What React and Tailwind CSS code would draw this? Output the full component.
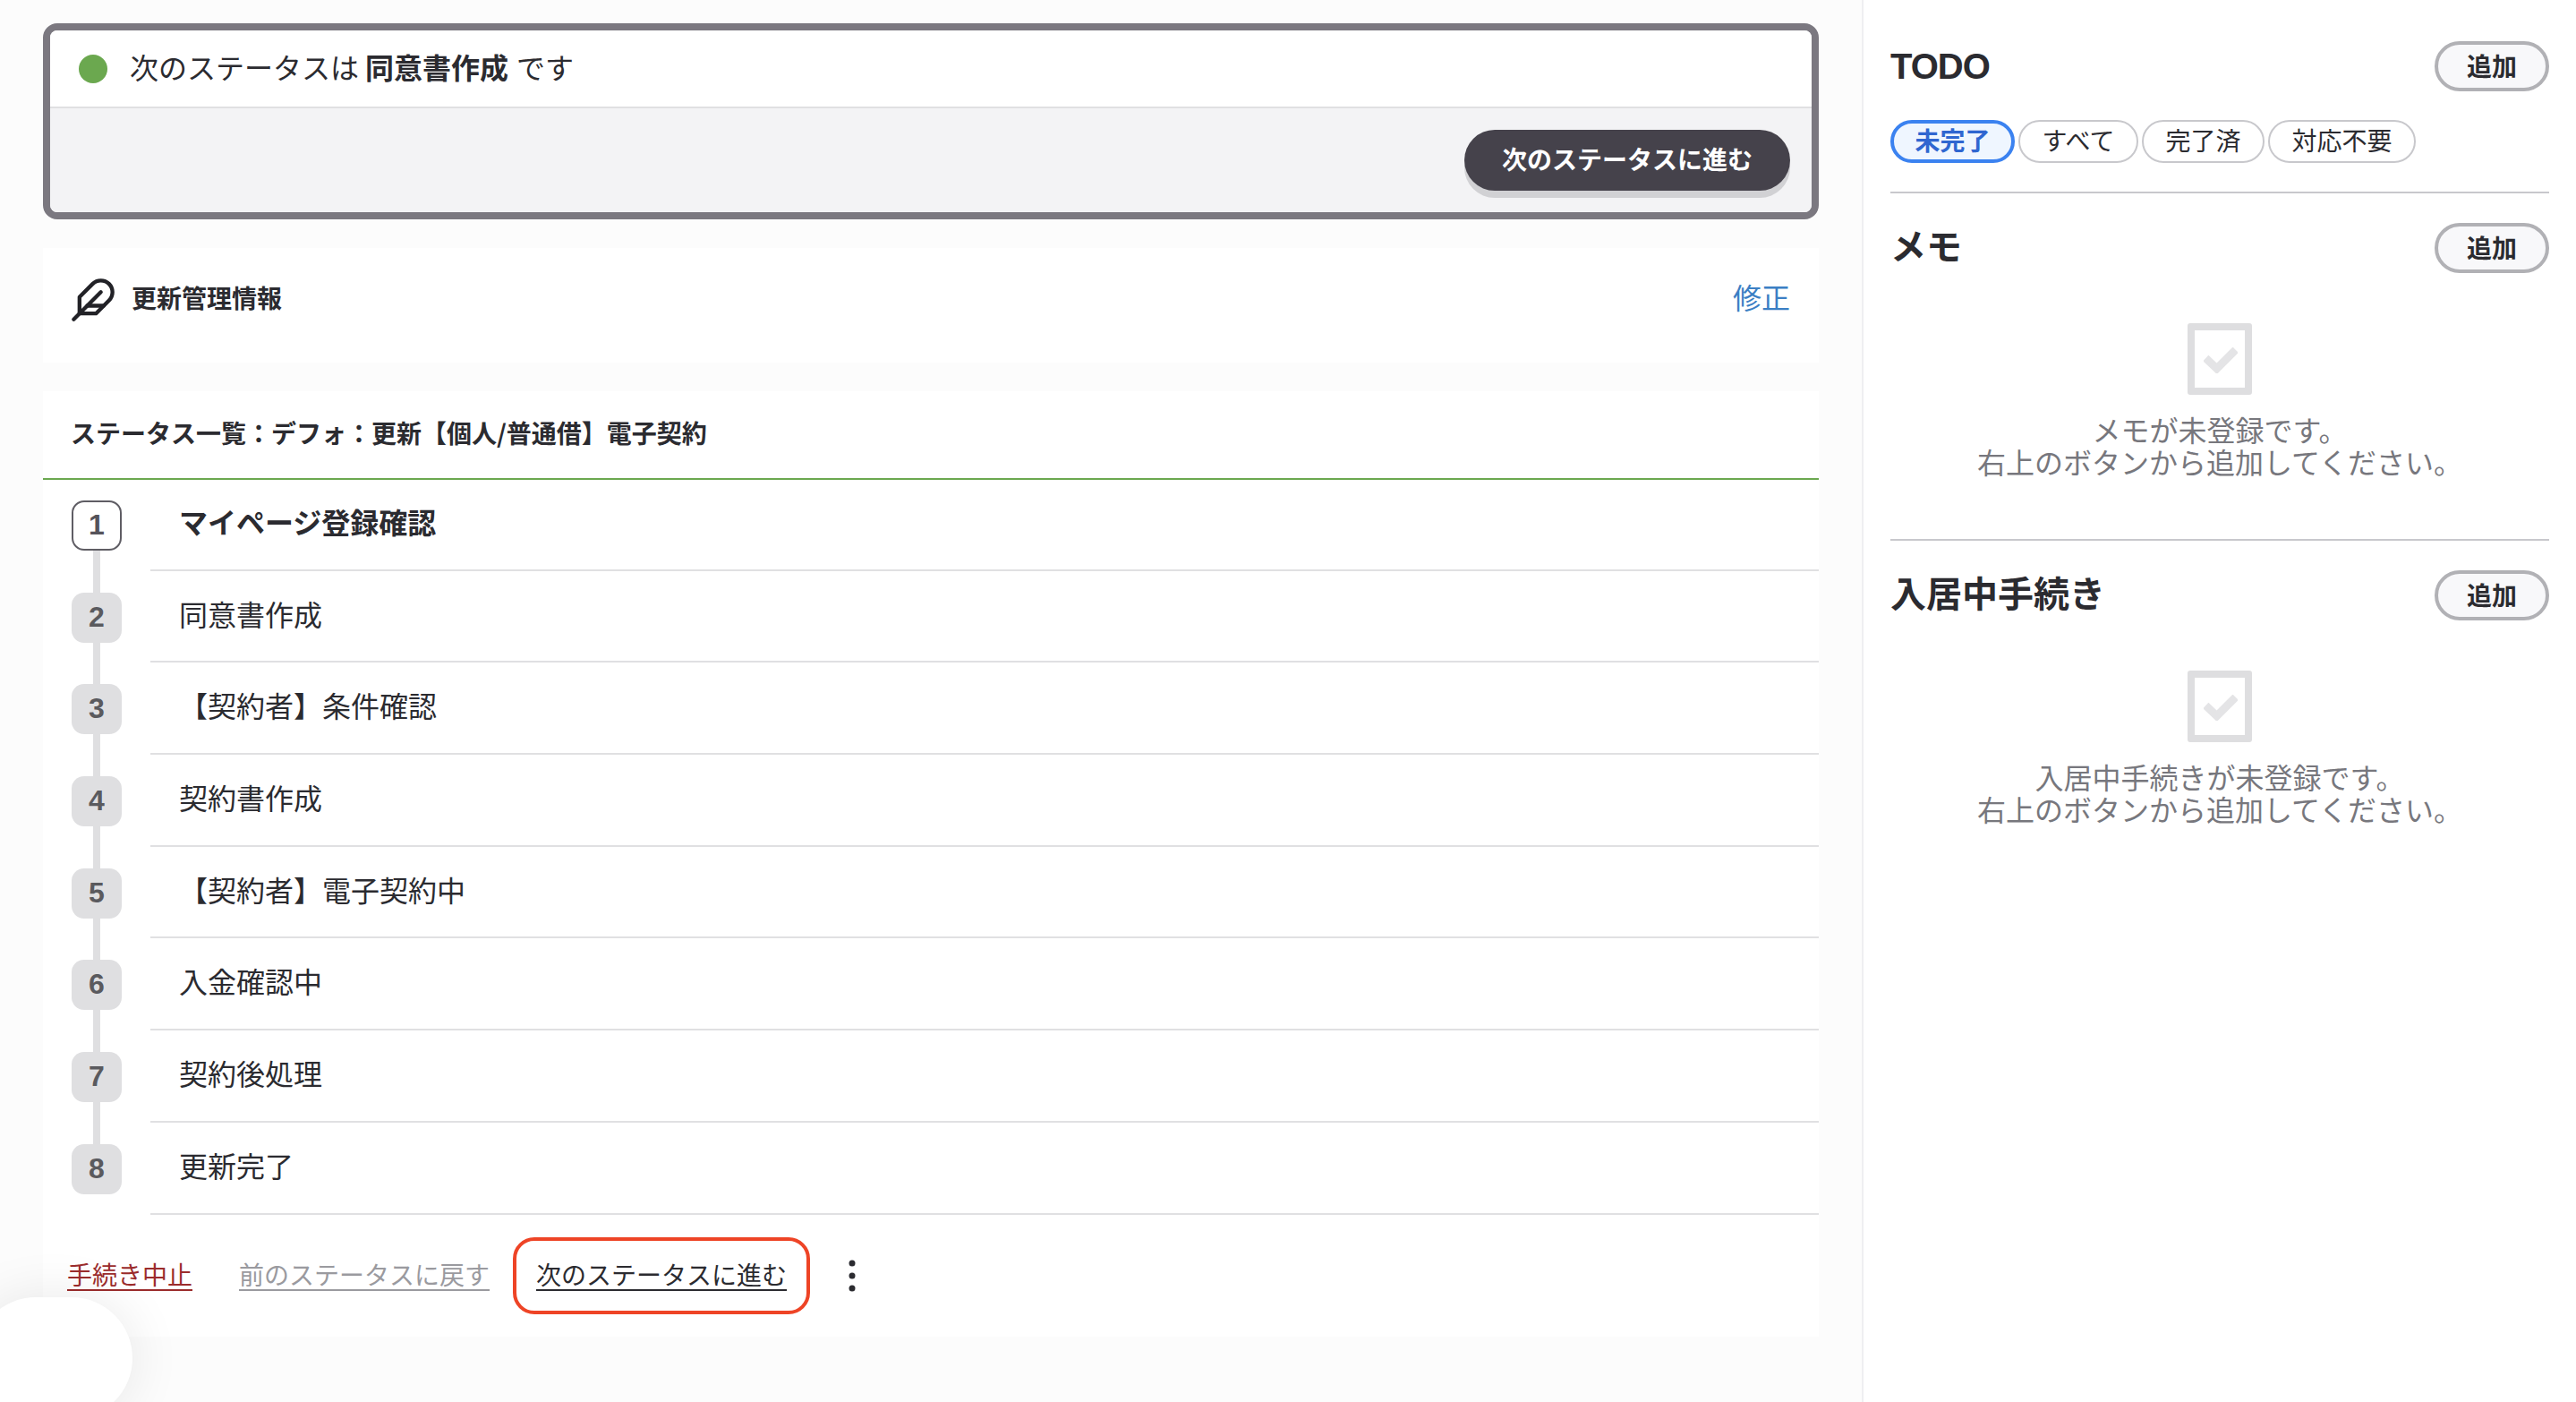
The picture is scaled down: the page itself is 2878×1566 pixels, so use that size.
const font = '[font-family:"Noto_Sans_CJK_JP","Noto_Sans",sans-serif]';
const latin = '[font-family:"Liberation_Sans",sans-serif]';

const steps = [
  'マイページ登録確認',
  '同意書作成',
  '【契約者】条件確認',
  '契約書作成',
  '【契約者】電子契約中',
  '入金確認中',
  '契約後処理',
  '更新完了',
];

const filters = ['すべて', '完了済', '対応不要'];

function StepRow({ num, label, first, last }) {
  return (
    <li className="flex h-[102.7px]">
      <div className="relative w-[120px] shrink-0 flex flex-col items-center">
        <div
          className={
            first
              ? `${latin} mt-6 w-14 h-14 pb-[2px] rounded-[14px] border-2 border-[#5f5d64] bg-white flex items-center justify-center text-[32px] font-bold text-[#55535a] z-10`
              : `${latin} mt-6 w-14 h-14 pb-[2px] rounded-[14px] bg-[#dfdfe1] flex items-center justify-center text-[32px] font-bold text-[#5a5a5e] z-10`
          }
        >
          {num}
        </div>
        {!last && <div className="absolute top-[78px] h-[50px] w-2 bg-[#dfdfe1]" />}
      </div>
      <div className="flex-1 border-b-2 border-[#e0e0e2] flex items-center pl-[32px] pb-[7px]">
        <span className={first ? 'text-[32px] font-bold text-[#2b2b30]' : 'text-[32px] text-[#2b2b30]'}>
          {label}
        </span>
      </div>
    </li>
  );
}

function AddButton() {
  return (
    <button className="w-32 h-14 pb-[3px] rounded-full border-4 border-[#b1b1b5] bg-[#f8f8fa] text-[28px] leading-none font-bold text-[#2b2b30] flex items-center justify-center">
      追加
    </button>
  );
}

function EmptyBlock({ line }) {
  return (
    <div className="flex flex-col items-center mt-14">
      <div className="w-[72px] h-[80px] rounded-[3px] border-8 border-[#dedee0] flex items-center justify-center">
        <svg className="mt-[3px] ml-[2px]" width="38" height="29" viewBox="0 0 38 29" fill="none">
          <path d="M2.3 12l12.4 11.7L35.7 2.7" stroke="#e4e4e6" strokeWidth="9" />
        </svg>
      </div>
      <p className="mt-5 text-center text-[32px] leading-[36px] text-[#77777d]">
        {line}
        <br />
        右上のボタンから追加してください。
      </p>
    </div>
  );
}

export default function App() {
  return (
    <div className={`${font} relative flex w-[2878px] h-[1566px] overflow-hidden bg-[#fcfcfc] text-[#2b2b30]`}>
      {/* Main column */}
      <main className="w-[2080px] shrink-0 px-12 pt-[26px]">
        <div className="rounded-[16px] border-8 border-[#7b7880] overflow-hidden">
          <div className="h-[85px] bg-white flex items-center pl-8 text-[32px]">
            <span className="w-8 h-8 rounded-full bg-[#6ba84f] mr-[25px]" />
            <div className="flex items-center pb-[6px]">
              <span>次のステータスは</span>
              <span className="font-bold ml-[7px]">同意書作成</span>
              <span className="ml-[9px]">です</span>
            </div>
          </div>
          <div className="h-[118px] bg-[#f3f3f5] border-t-2 border-[#e0e0e2] flex justify-end items-start pt-6 pr-6">
            <button className="w-[364px] h-[68px] pb-[5px] rounded-full bg-[#45424b] text-white text-[28px] font-bold shadow-[0_8px_0_#d1d1d4]">
              次のステータスに進む
            </button>
          </div>
        </div>

        <section className="mt-8 h-[128px] bg-white flex items-center pl-[30px] pr-8 pb-3">
          {/* feather */}
          <svg width="52" height="52" viewBox="0 0 24 24" fill="none" stroke="#222227" strokeWidth="2" strokeLinecap="round" strokeLinejoin="round">
            <path d="M20.24 12.24a6 6 0 0 0-8.49-8.49L5 10.5V19h8.5z" />
            <path d="M16 8 2 22" />
            <path d="M17.5 15H9" />
          </svg>
          <h2 className="ml-[17px] mb-[7px] text-[28px] font-bold">更新管理情報</h2>
          <a className="ml-auto mb-[8px] text-[32px] text-[#3b7fc4]">修正</a>
        </section>

        <section className="mt-8 bg-white h-[1056px]">
          <h2 className="h-[99px] border-b-2 border-[#6ba84f] flex items-center pl-[31px] pb-[5px] text-[28px] font-bold">
            ステータス一覧：デフォ：更新【個人/普通借】電子契約
          </h2>
          <ol className="-mt-px">
            {steps.map((label, i) => (
              <StepRow key={label} num={i + 1} label={label} first={i === 0} last={i === steps.length - 1} />
            ))}
          </ol>
          <div className="flex items-center pl-[27px] pt-[25px] text-[28px]">
            <a className="mb-1 underline underline-offset-[5px] text-[#9b2c2c]">手続き中止</a>
            <a className="ml-[52px] mb-1 underline underline-offset-[5px] text-[#9a9a9f]">前のステータスに戻す</a>
            <div className="ml-[26px] w-[332px] h-[86px] pb-1 rounded-[24px] border-4 border-[#ee4426] flex items-center justify-center">
              <a className="underline underline-offset-[5px] text-[#2b2b30]">次のステータスに進む</a>
            </div>
            <svg className="ml-[43px]" width="8" height="36" viewBox="0 0 8 36">
              <circle cx="4" cy="4" r="3.5" fill="#2b2b30" />
              <circle cx="4" cy="18" r="3.5" fill="#2b2b30" />
              <circle cx="4" cy="32" r="3.5" fill="#2b2b30" />
            </svg>
          </div>
        </section>
      </main>

      {/* Right panel */}
      <aside className="flex-1 bg-white border-l-2 border-[#efeff1] px-[30px]">
        <div className="pt-[46px] pb-8 border-b-2 border-[#c8c8cc]">
          <div className="flex items-center justify-between">
            <h2 className={`${latin} text-[40px] leading-none font-bold tracking-[-1px]`}>TODO</h2>
            <AddButton />
          </div>
          <div className="mt-8 flex gap-1">
            <button className="h-12 px-[23.5px] pb-[4px] rounded-full border-4 border-[#3b82f0] bg-[#eff6ff] text-[28px] leading-none font-bold text-[#2f66d0]">
              未完了
            </button>
            {filters.map((f) => (
              <button key={f} className="h-12 px-[24.5px] pb-[4px] rounded-full border-2 border-[#c8c8cc] bg-white text-[28px] leading-none">
                {f}
              </button>
            ))}
          </div>
        </div>

        <div className="pt-[33px] pb-[69px] border-b-2 border-[#c8c8cc]">
          <div className="flex items-center justify-between">
            <h2 className="text-[40px] leading-none font-bold pb-[8px]">メモ</h2>
            <AddButton />
          </div>
          <EmptyBlock line="メモが未登録です。" />
        </div>

        <div className="pt-[33px]">
          <div className="flex items-center justify-between">
            <h2 className="text-[40px] leading-none font-bold pb-[8px]">入居中手続き</h2>
            <AddButton />
          </div>
          <EmptyBlock line="入居中手続きが未登録です。" />
        </div>
      </aside>

      {/* floating widget in the corner */}
      <div className="absolute left-[-28px] top-[1449px] w-[176px] h-[136px] rounded-full bg-white shadow-[0_0_60px_rgba(0,0,0,0.09)]" />
    </div>
  );
}
